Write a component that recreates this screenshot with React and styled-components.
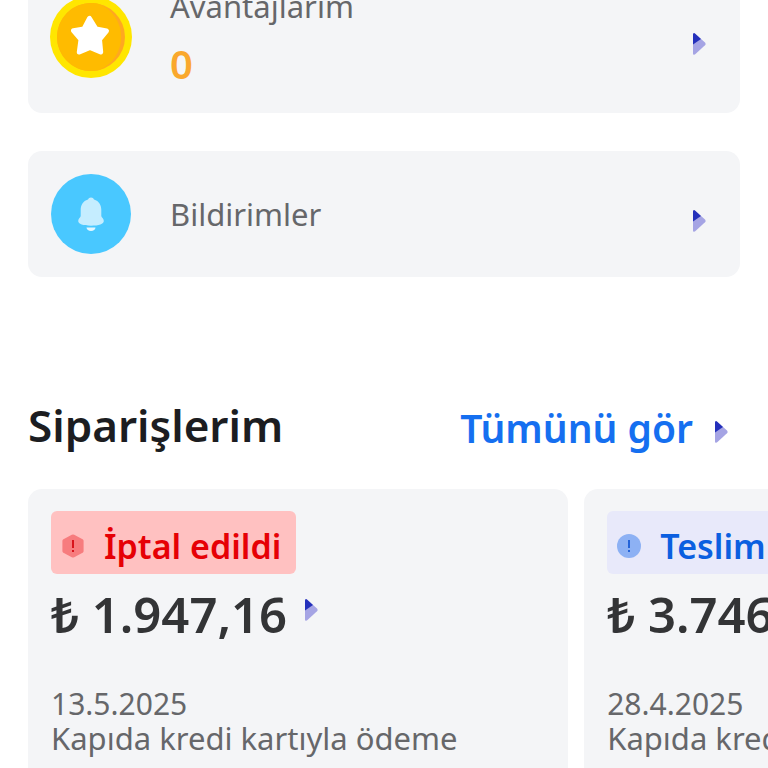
import React from "react";
import styled, { createGlobalStyle } from "styled-components";

const GlobalStyle = createGlobalStyle`
  * {
    box-sizing: border-box;
  }
  body {
    margin: 0;
    background: #ffffff;
    font-family: "Noto Sans", sans-serif;
  }
`;

const Screen = styled.div`
  height: 100vh;
  overflow: hidden;
`;

const Menu = styled.nav`
  display: flex;
  flex-direction: column;
  gap: 38px;
  margin-top: -27px;
  padding: 0 28px;
`;

const MenuCard = styled.a`
  display: flex;
  align-items: center;
  padding: ${({ $tall }) => ($tall ? "13px 34px 25px 22px" : "23px 34px 23px 22px")};
  border-radius: 14px;
  background: #f4f5f7;
  color: #66676a;
  text-decoration: none;
`;

const MenuIcon = styled.span`
  flex: none;
  display: flex;
  justify-content: center;
  width: 82px;
`;

const MenuText = styled.span`
  flex: 1;
  display: flex;
  flex-direction: column;
  gap: 14px;
  margin-left: 38px;
  font-size: 31px;
  line-height: 40px;
`;

const Points = styled.strong`
  color: #faa82d;
  font-size: 40px;
  font-weight: 600;
  line-height: 48px;
`;

const MenuArrow = styled.span`
  display: flex;
  margin-top: 14px;
`;

const Icon = styled.svg`
  display: block;
  flex: none;
`;

const SectionHeader = styled.header`
  display: flex;
  align-items: center;
  justify-content: space-between;
  padding: 118px 40px 0 28px;
`;

const Title = styled.h2`
  margin: 0;
  color: #1c1d21;
  font-size: 44px;
  font-weight: 600;
  line-height: 60px;
`;

const SeeAll = styled.a`
  display: flex;
  align-items: center;
  gap: 22px;
  padding-top: 6px;
  color: #156ff0;
  font-size: 39px;
  font-weight: 600;
  line-height: 54px;
  text-decoration: none;
`;

const SeeAllArrow = styled.span`
  display: flex;
  padding-top: 8px;
`;

const Orders = styled.div`
  display: flex;
  gap: 16px;
  margin-top: 34px;
  padding-left: 28px;
  overflow: hidden;
`;

const OrderCard = styled.article`
  flex: 0 0 73%;
  padding: 22px 23px 40px;
  border-radius: 14px;
  background: #f4f5f7;
  white-space: nowrap;
`;

const Badge = styled.span`
  display: inline-flex;
  align-items: center;
  height: 63px;
  padding: 6px 15px 0 10px;
  gap: 19px;
  border-radius: 6px;
  background: ${({ $status }) => ($status === "cancelled" ? "#ffc1c1" : "#e8e9fa")};
  color: ${({ $status }) => ($status === "cancelled" ? "#e60005" : "#0b5fe0")};
  font-size: 34px;
  font-weight: 600;
`;

const Price = styled.a`
  display: flex;
  align-items: center;
  gap: 18px;
  margin-top: 6px;
  color: #333436;
  font-size: 49px;
  font-weight: 600;
  line-height: 68px;
  text-decoration: none;
`;

const PriceArrow = styled.span`
  display: flex;
  padding-bottom: 8px;
`;

const Details = styled.div`
  margin-top: 39px;
  color: #66676a;
  font-size: 31px;
  line-height: 34px;
`;

const OrderDate = styled.time`
  display: block;
  font-size: 30px;
`;

const Payment = styled.p`
  margin: 0;
`;

const Arrow = () => (
  <Icon width="13" height="22" viewBox="0 0 13 22" aria-hidden="true">
    <path
      d="M0 10.500V1.500C0 .3 1.200-.2 2.200.7L12 9.600C12.800 10.400 12.800 11.400 12 12.200L2.200 21.300C1.200 22.200 0 21.700 0 20.500Z"
      fill="#a5a4e4"
    />
    <path d="M0 11.500V1.500C0 .3 1.200-.2 2.200.7L8 6Z" fill="#2430bb" />
  </Icon>
);

const CoinIcon = () => (
  <Icon width="82" height="82" viewBox="0 0 82 82" aria-hidden="true">
    <circle cx="41" cy="41" r="41" fill="#ffe600" />
    <circle cx="41" cy="41" r="34" fill="#ffa820" />
    <path d="M50 8.200A34 34 0 1 0 50 73.800A36 36 0 0 0 50 8.200Z" fill="#ffbb00" />
    <path
      d="M39.500 22.500L34 33L23.500 34.700L31 43.500L29.300 56L40 51.500L50.700 56L49.500 43.500L56.500 35L46 33Z"
      fill="#ffffff"
      stroke="#ffffff"
      strokeWidth="5"
      strokeLinejoin="round"
    />
  </Icon>
);

const BellIcon = () => (
  <Icon width="80" height="80" viewBox="0 0 80 80" aria-hidden="true">
    <circle cx="40" cy="40" r="40" fill="#49c8ff" />
    <path
      d="M40 23.500C41.500 23.500 42.500 24.300 43 25.500C48 27 50.300 31 50.300 36V42C50.300 43.500 52.800 44.300 52.800 47C52.800 50 48 51.700 40 51.700S27.200 50 27.200 47C27.200 44.300 29.700 43.500 29.700 42V36C29.700 31 32 27 37 25.500C37.500 24.300 38.500 23.500 40 23.500Z"
      fill="#c5edff"
    />
    <path d="M35.500 53.500H44.500C44.300 55.800 42.500 57 40 57S35.700 55.800 35.500 53.500Z" fill="#e3f7ff" />
  </Icon>
);

const StatusIcon = ({ status }) => (
  <Icon width="24" height="24" viewBox="0 0 24 24" aria-hidden="true">
    {status === "cancelled" ? (
      <path
        d="M10.800.8Q12 .2 13.200.8L21.600 5.200Q22.600 5.800 22.600 7V17Q22.600 18.200 21.600 18.800L13.200 23.200Q12 23.800 10.800 23.200L2.400 18.800Q1.400 18.200 1.400 17V7Q1.400 5.800 2.400 5.200Z"
        fill="#f77c7e"
      />
    ) : (
      <circle cx="12" cy="12" r="12" fill="#8db1f4" />
    )}
    <path
      d="M12 6V14M12 16V18"
      stroke={status === "cancelled" ? "#d8141c" : "#2463d8"}
      strokeWidth="2"
    />
  </Icon>
);

const orders = [
  {
    id: 1,
    status: "cancelled",
    label: "İptal edildi",
    price: "₺ 1.947,16",
    date: "13.5.2025",
    payment: "Kapıda kredi kartıyla ödeme"
  },
  {
    id: 2,
    status: "delivered",
    label: "Teslim edildi",
    price: "₺ 3.746",
    date: "28.4.2025",
    payment: "Kapıda kredi kartıyla ödeme"
  }
];

const Order = ({ status, label, price, date, payment }) => (
  <OrderCard>
    <Badge $status={status}>
      <StatusIcon status={status} />
      {label}
    </Badge>
    <Price href="#order">
      {price}
      <PriceArrow>
        <Arrow />
      </PriceArrow>
    </Price>
    <Details>
      <OrderDate>{date}</OrderDate>
      <Payment>{payment}</Payment>
    </Details>
  </OrderCard>
);

const App = () => (
  <Screen>
    <GlobalStyle />
    <Menu>
      <MenuCard href="#advantages" $tall>
        <MenuIcon>
          <CoinIcon />
        </MenuIcon>
        <MenuText>
          Avantajlarım
          <Points>0</Points>
        </MenuText>
        <MenuArrow>
          <Arrow />
        </MenuArrow>
      </MenuCard>
      <MenuCard href="#notifications">
        <MenuIcon>
          <BellIcon />
        </MenuIcon>
        <MenuText>Bildirimler</MenuText>
        <MenuArrow>
          <Arrow />
        </MenuArrow>
      </MenuCard>
    </Menu>
    <section>
      <SectionHeader>
        <Title>Siparişlerim</Title>
        <SeeAll href="#orders">
          Tümünü gör
          <SeeAllArrow>
            <Arrow />
          </SeeAllArrow>
        </SeeAll>
      </SectionHeader>
      <Orders>
        {orders.map(order => (
          <Order key={order.id} {...order} />
        ))}
      </Orders>
    </section>
  </Screen>
);

export default App;
